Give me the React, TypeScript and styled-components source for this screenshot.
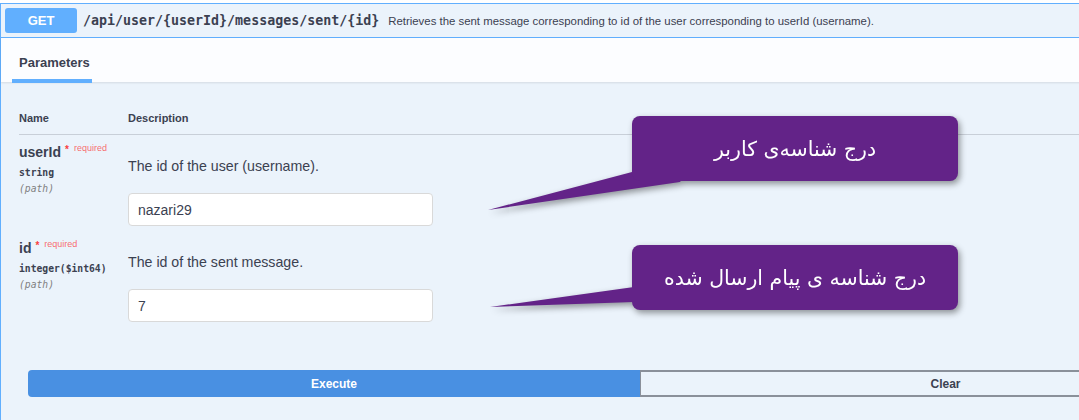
import styled, { createGlobalStyle } from 'styled-components';

const GlobalStyle = createGlobalStyle`
  html, body {
    margin: 0;
    padding: 0;
    background: #fff;
    overflow: hidden;
  }
  body {
    font-family: 'Liberation Sans', Arial, sans-serif;
    color: #3b4151;
  }
`;

type Param = {
  name: string;
  type: string;
  description: string;
  value: string;
};

const params: Param[] = [
  { name: 'userId', type: 'string', description: 'The id of the user (username).', value: 'nazari29' },
  { name: 'id', type: 'integer($int64)', description: 'The id of the sent message.', value: '7' },
];

function Callout({ top, left, width, height, tail, text }: {
  top: number;
  left: number;
  width: number;
  height: number;
  tail: string;
  text: string;
}) {
  return (
    <CalloutWrap $top={top} $left={left} $width={width} $height={height}>
      <Tail width={width} height={height}>
        <polygon points={tail} fill="#632388" />
      </Tail>
      <Bubble dir="rtl">{text}</Bubble>
    </CalloutWrap>
  );
}

function App() {
  return (
    <>
      <GlobalStyle />
      <Page>
        <Opblock>
          <Summary>
            <Method>GET</Method>
            <Path>/api/user/{'{userId}'}/messages/sent/{'{id}'}</Path>
            <SummaryText>
              Retrieves the sent message corresponding to id of the user corresponding to userId (username).
            </SummaryText>
          </Summary>

          <TabHeader>
            <Tab>Parameters</Tab>
          </TabHeader>

          <TableContainer>
            <HeadRow>
              <HeadCell>Name</HeadCell>
              <HeadCell>Description</HeadCell>
            </HeadRow>
            {params.map((p) => (
              <ParamRow key={p.name}>
                <NameCell>
                  <ParamName>
                    {p.name}
                    <Star>*</Star>
                    <Required>required</Required>
                  </ParamName>
                  <ParamType>{p.type}</ParamType>
                  <ParamIn>(path)</ParamIn>
                </NameCell>
                <DescCell>
                  <DescText>{p.description}</DescText>
                  <Input defaultValue={p.value} />
                </DescCell>
              </ParamRow>
            ))}
          </TableContainer>

          <ExecuteWrapper>
            <ExecuteButton>Execute</ExecuteButton>
            <ClearButton>Clear</ClearButton>
          </ExecuteWrapper>
        </Opblock>

        <Callout
          top={116}
          left={486}
          width={472}
          height={96}
          tail="2,94 146,56 200,58 194,66"
          text="درج شناسه‌ی کاربر"
        />
        <Callout
          top={245}
          left={488}
          width={470}
          height={65}
          tail="2,62 146,42 150,50 146,57"
          text="درج شناسه ی پیام ارسال شده"
        />
      </Page>
    </>
  );
}

export default App;

const Page = styled.div`
  position: relative;
  width: 1079px;
  height: 420px;
  overflow: hidden;
  padding-top: 3px;
  box-sizing: border-box;
`;

const Opblock = styled.div`
  width: 1280px;
  background: #ebf3fb;
  border: 1px solid #61affe;
  border-right: none;
  border-bottom: none;
  height: 430px;
`;

const Summary = styled.div`
  display: flex;
  align-items: center;
  height: 34px;
  box-sizing: border-box;
  padding: 0 4px;
  border-bottom: 1px solid #61affe;
`;

const Method = styled.div`
  width: 72px;
  height: 25px;
  display: flex;
  align-items: center;
  justify-content: center;
  background: #61affe;
  border-radius: 3px;
  color: #fff;
  font-weight: 700;
  font-size: 13px;
`;

const Path = styled.span`
  margin-left: 6px;
  font-family: 'DejaVu Sans Mono', 'Liberation Mono', monospace;
  font-size: 13.3px;
  font-weight: 600;
  color: #3b4151;
`;

const SummaryText = styled.span`
  margin-left: 9px;
  font-size: 11.4px;
  color: #3b4151;
`;

const TabHeader = styled.div`
  height: 44px;
  box-sizing: border-box;
  padding: 15px 18px 0;
  background: rgba(255, 255, 255, 0.82);
  box-shadow: 0 1px 2px rgba(0, 0, 0, 0.1);
`;

const Tab = styled.div`
  position: relative;
  display: inline-block;
  height: 29px;
  font-size: 13px;
  line-height: 16px;
  font-weight: 700;
  color: #3b4151;

  &::after {
    content: '';
    position: absolute;
    left: -7px;
    bottom: 1px;
    width: 80px;
    height: 4px;
    background: #61affe;
  }
`;

const TableContainer = styled.div`
  padding: 30px 0 0 18px;
`;

const HeadRow = styled.div`
  display: grid;
  grid-template-columns: 109px 1fr;
  padding-bottom: 9px;
  border-bottom: 1px solid rgba(59, 65, 81, 0.2);
`;

const HeadCell = styled.div`
  font-size: 11px;
  line-height: 13px;
  font-weight: 700;
  color: #3b4151;
`;

const ParamRow = styled.div`
  display: grid;
  grid-template-columns: 109px 1fr;
  padding: 0 0 5px;
`;

const NameCell = styled.div`
  padding-top: 9px;
`;

const ParamName = styled.div`
  font-size: 14px;
  line-height: 16px;
  font-weight: 700;
  color: #3b4151;
  white-space: nowrap;
`;

const Star = styled.span`
  position: relative;
  top: -4px;
  margin-left: 4px;
  font-size: 10px;
  color: #f93e3e;
`;

const Required = styled.span`
  position: relative;
  top: -6px;
  margin-left: 5px;
  font-size: 9px;
  font-weight: 400;
  color: rgba(255, 0, 0, 0.6);
`;

const ParamType = styled.div`
  margin-top: 4px;
  font-family: 'DejaVu Sans Mono', 'Liberation Mono', monospace;
  font-size: 9.7px;
  line-height: 14px;
  font-weight: 600;
  color: #3b4151;
`;

const ParamIn = styled.div`
  margin-top: 2px;
  font-family: 'DejaVu Sans Mono', 'Liberation Mono', monospace;
  font-size: 9.7px;
  line-height: 14px;
  font-style: italic;
  color: #808080;
`;

const DescCell = styled.div`
  padding-top: 21px;
`;

const DescText = styled.p`
  margin: 0;
  font-size: 14.2px;
  line-height: 20px;
  color: #3b4151;
`;

const Input = styled.input`
  display: block;
  margin-top: 17px;
  width: 305px;
  height: 33px;
  box-sizing: border-box;
  padding: 0 9px;
  border: 1px solid #d9d9d9;
  border-radius: 4px;
  background: #fff;
  font-family: 'Liberation Sans', Arial, sans-serif;
  font-size: 14px;
  color: #3b4151;
  outline: none;
`;

const ExecuteWrapper = styled.div`
  display: grid;
  grid-template-columns: 612px 612px;
  padding: 43px 0 0 27px;
`;

const ExecuteButton = styled.button`
  height: 27px;
  border: none;
  border-radius: 4px 0 0 4px;
  background: #4990e2;
  color: #fff;
  font-family: 'Liberation Sans', Arial, sans-serif;
  font-size: 12px;
  font-weight: 700;
  padding: 0;
`;

const ClearButton = styled.button`
  height: 27px;
  box-sizing: border-box;
  border: 2px solid #8a909a;
  border-left-width: 1px;
  border-radius: 0 4px 4px 0;
  background: transparent;
  color: #3b4151;
  font-family: 'Liberation Sans', Arial, sans-serif;
  font-size: 12px;
  font-weight: 700;
  padding: 0;
`;

const CalloutWrap = styled.div<{ $top: number; $left: number; $width: number; $height: number }>`
  position: absolute;
  top: ${(p) => p.$top}px;
  left: ${(p) => p.$left}px;
  width: ${(p) => p.$width}px;
  height: ${(p) => p.$height}px;
  filter: drop-shadow(2px 3px 3px rgba(0, 0, 0, 0.4));
`;

const Tail = styled.svg`
  position: absolute;
  left: 0;
  top: 0;
`;

const Bubble = styled.div`
  position: absolute;
  right: 0;
  top: 0;
  width: 326px;
  height: 65px;
  display: flex;
  align-items: center;
  justify-content: center;
  background: #632388;
  border-radius: 8px;
  color: #fff;
  font-family: 'DejaVu Sans', sans-serif;
  font-size: 20.5px;
`;
